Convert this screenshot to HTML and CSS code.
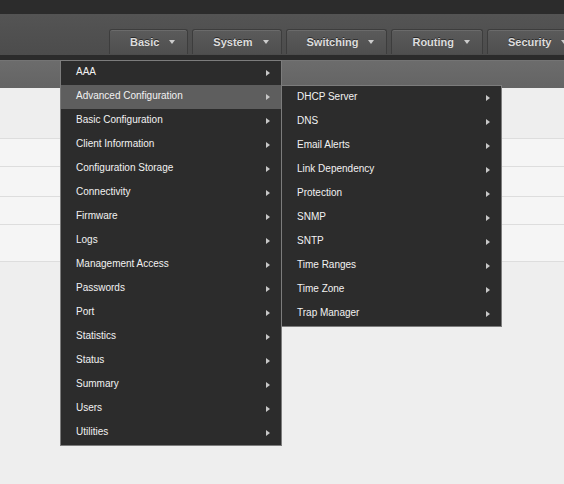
FILE: index.html
```html
<!DOCTYPE html>
<html>
<head>
<meta charset="utf-8">
<link rel="stylesheet" href="styles.css">
</head>
<body>
<div class="topbar"></div>
<div class="navband">
  <div class="tab"><span>Basic</span><i class="caret"></i></div>
  <div class="tab"><span>System</span><i class="caret"></i></div>
  <div class="tab"><span>Switching</span><i class="caret"></i></div>
  <div class="tab"><span>Routing</span><i class="caret"></i></div>
  <div class="tab"><span>Security</span><i class="caret"></i></div>
</div>
<div class="strip"></div>
<div class="subbar"></div>
<div class="content">
  <div class="head"></div>
  <div class="row r1"></div>
  <div class="row r2"></div>
  <div class="row r3"></div>
  <div class="row r4"></div>
</div>

<ul class="menu menu1">
  <li class="item"><span class="lbl">AAA</span><i class="arr"></i></li>
  <li class="item active"><span class="lbl">Advanced Configuration</span><i class="arr"></i></li>
  <li class="item"><span class="lbl">Basic Configuration</span><i class="arr"></i></li>
  <li class="item"><span class="lbl">Client Information</span><i class="arr"></i></li>
  <li class="item"><span class="lbl">Configuration Storage</span><i class="arr"></i></li>
  <li class="item"><span class="lbl">Connectivity</span><i class="arr"></i></li>
  <li class="item"><span class="lbl">Firmware</span><i class="arr"></i></li>
  <li class="item"><span class="lbl">Logs</span><i class="arr"></i></li>
  <li class="item"><span class="lbl">Management Access</span><i class="arr"></i></li>
  <li class="item"><span class="lbl">Passwords</span><i class="arr"></i></li>
  <li class="item"><span class="lbl">Port</span><i class="arr"></i></li>
  <li class="item"><span class="lbl">Statistics</span><i class="arr"></i></li>
  <li class="item"><span class="lbl">Status</span><i class="arr"></i></li>
  <li class="item"><span class="lbl">Summary</span><i class="arr"></i></li>
  <li class="item"><span class="lbl">Users</span><i class="arr"></i></li>
  <li class="item"><span class="lbl">Utilities</span><i class="arr"></i></li>
</ul>

<ul class="menu menu2">
  <li class="item"><span class="lbl">DHCP Server</span><i class="arr"></i></li>
  <li class="item"><span class="lbl">DNS</span><i class="arr"></i></li>
  <li class="item"><span class="lbl">Email Alerts</span><i class="arr"></i></li>
  <li class="item"><span class="lbl">Link Dependency</span><i class="arr"></i></li>
  <li class="item"><span class="lbl">Protection</span><i class="arr"></i></li>
  <li class="item"><span class="lbl">SNMP</span><i class="arr"></i></li>
  <li class="item"><span class="lbl">SNTP</span><i class="arr"></i></li>
  <li class="item"><span class="lbl">Time Ranges</span><i class="arr"></i></li>
  <li class="item"><span class="lbl">Time Zone</span><i class="arr"></i></li>
  <li class="item"><span class="lbl">Trap Manager</span><i class="arr"></i></li>
</ul>
</body>
</html>
```

FILE: styles.css
```css
html, body {
  margin: 0;
  padding: 0;
}
body {
  background: #eeeeee;
  font-family: "Liberation Sans", Arial, Helvetica, sans-serif;
  overflow: hidden;
  width: 564px;
  height: 484px;
  position: relative;
}
.topbar {
  height: 14px;
  background: #2c2c2c;
}
.navband {
  height: 41px;
  box-sizing: border-box;
  padding: 15px 0 0 109px;
  background: linear-gradient(#545454, #4c4c4c);
  display: flex;
  gap: 4px;
  align-items: flex-start;
  overflow: hidden;
  white-space: nowrap;
}
.tab {
  flex: none;
  height: 25px;
  box-sizing: border-box;
  padding: 0 12px 0 20px;
  display: flex;
  align-items: center;
  gap: 10px;
  background: linear-gradient(#5b5b5b, #4f4f4f);
  border: 1px solid #3d3d3d;
  border-bottom: none;
  border-radius: 3px 3px 0 0;
  box-shadow: inset 0 1px 0 rgba(255,255,255,0.10);
  color: #dddddd;
  font-weight: bold;
  font-size: 11px;
  text-shadow: 0 -1px 0 #2a2a2a;
}
.tab span {
  padding-bottom: 1px;
}
.caret {
  width: 0;
  height: 0;
  border-top: 4px solid #cccccc;
  border-left: 3.5px solid transparent;
  border-right: 3.5px solid transparent;
}
.strip {
  height: 5px;
  background: #2b2b2b;
}
.subbar {
  height: 28px;
  background: linear-gradient(#6c6c6c, #646464);
  border-top: 1px solid #747474;
  box-sizing: border-box;
}
.content .head {
  height: 50px;
  background: #eeeeee;
}
.row {
  background: #f5f5f5;
  border-top: 1px solid #dddddd;
}
.r1 { height: 27px; }
.r2 { height: 29px; }
.r3 { height: 27px; }
.r4 { height: 36px; border-bottom: 1px solid #dddddd; }

.menu {
  position: absolute;
  margin: 0;
  padding: 0;
  list-style: none;
  background: #2c2c2c;
  border: 1px solid #7c7c7c;
}
.menu1 {
  left: 60px;
  top: 60px;
  width: 220px;
}
.menu2 {
  left: 281px;
  top: 85px;
  width: 219px;
}
.item {
  height: 24px;
  display: flex;
  align-items: center;
  justify-content: space-between;
  padding: 0 11px 0 15px;
  color: #f2f2f2;
  font-size: 10px;
}
.item.active {
  background: #5e5e5e;
}
.lbl {
  line-height: 12px;
  padding-bottom: 2px;
}
.arr {
  width: 0;
  height: 0;
  border-left: 4px solid #c8c8c8;
  border-top: 3.5px solid transparent;
  border-bottom: 3.5px solid transparent;
}
```
